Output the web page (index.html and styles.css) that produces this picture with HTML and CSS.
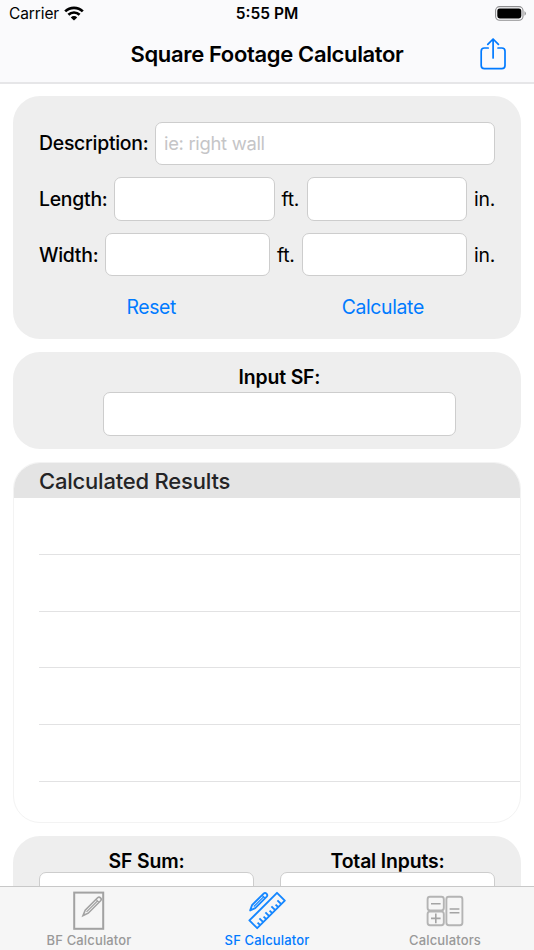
FILE: index.html
```html
<!DOCTYPE html>
<html lang="en">
<head>
    <meta charset="UTF-8">
    <meta name="viewport" content="width=device-width, initial-scale=1.0">
    <title>Square Footage Calculator</title>
    <link rel="stylesheet" href="styles.css">
</head>
<body>
    <div class="app">
        <header class="top">
            <div class="status-bar">
                <div class="carrier">
                    <span>Carrier</span>
                    <svg width="20" height="15" viewBox="0 0 20 15" fill="none" stroke="#000" stroke-width="2.7">
                        <path d="M1.2 5.4A12.6 12.6 0 0 1 18.8 5.4"/>
                        <path d="M4.4 8.8A8 8 0 0 1 15.6 8.8"/>
                        <path d="M10 14.6L6.8 11.4A4.6 4.6 0 0 1 13.2 11.4Z" fill="#000" stroke="none"/>
                    </svg>
                </div>
                <div class="time">5:55 PM</div>
                <svg class="battery" width="32" height="15" viewBox="0 0 32 15">
                    <rect x=".6" y=".6" width="27.4" height="13.6" rx="4" fill="none" stroke="#8e8e90" stroke-width="1.1"/>
                    <rect x="2.3" y="2.4" width="24" height="10" rx="2.4" fill="#000"/>
                    <path d="M29.5 5.1Q32.3 7.4 29.5 9.7Z" fill="#8e8e90"/>
                </svg>
            </div>
            <div class="nav-bar">
                <h1>Square Footage Calculator</h1>
                <svg class="share" width="26" height="32" viewBox="0 0 26 32" fill="none" stroke="#007aff" stroke-width="1.7" stroke-linecap="round" stroke-linejoin="round">
                    <path d="M8.2 10H4.4Q1.2 10 1.2 13.2V27.4Q1.2 30.6 4.4 30.6H21.8Q25 30.6 25 27.4V13.2Q25 10 21.8 10H18"/>
                    <path d="M13.1 20V1.2M7.8 6.4L13.1 1L18.4 6.4"/>
                </svg>
            </div>
        </header>

        <main class="content">
            <section class="card inputs">
                <div class="row">
                    <label class="description" for="description">Description:</label>
                    <input id="description" type="text" placeholder="ie: right wall">
                </div>
                <div class="row">
                    <label class="length" for="length-ft">Length:</label>
                    <input id="length-ft" type="text">
                    <span class="ft">ft.</span>
                    <input type="text">
                    <span class="in">in.</span>
                </div>
                <div class="row">
                    <label class="width" for="width-ft">Width:</label>
                    <input id="width-ft" type="text">
                    <span class="ft">ft.</span>
                    <input type="text">
                    <span class="in">in.</span>
                </div>
                <div class="buttons">
                    <button type="button">Reset</button>
                    <button type="button">Calculate</button>
                </div>
            </section>

            <section class="card input-sf">
                <label for="input-sf">Input SF:</label>
                <input id="input-sf" type="text">
            </section>

            <section class="results">
                <h2>Calculated Results</h2>
                <ul>
                    <li></li>
                    <li></li>
                    <li></li>
                    <li></li>
                    <li></li>
                </ul>
            </section>

            <section class="card totals">
                <div class="total">
                    <label for="sf-sum">SF Sum:</label>
                    <input id="sf-sum" type="text">
                </div>
                <div class="total">
                    <label for="total-inputs">Total Inputs:</label>
                    <input id="total-inputs" type="text">
                </div>
            </section>
        </main>

        <nav class="tab-bar">
            <div class="tab">
                <svg width="40" height="40" viewBox="0 0 40 40" fill="none" stroke="#a2a2a2" stroke-width="1.6">
                    <rect x="5.2" y="1.6" width="29" height="36.2" stroke-width="2"/>
                    <path d="M14 24.6L16.2 19.2L28.6 6.8Q30 5.4 31.5 6.8Q33 8.3 31.6 9.8L19.2 22.2Z"/>
                    <path d="M27 8.4L30 11.4M17.5 20.9L28.7 9.8" stroke-width="1.2"/>
                </svg>
                <span>BF Calculator</span>
            </div>
            <div class="tab active">
                <svg width="40" height="40" viewBox="0 0 40 40" fill="none" stroke="#1687ff" stroke-width="1.9" stroke-linejoin="round">
                    <path d="M30 1.8L37.8 9.6L10.2 37.2L2.4 29.4Z"/>
                    <path d="M13.2 34.2L10.6 31.6M16.2 31.2L12.4 27.4M19.2 28.2L16.6 25.6M22.2 25.2L18.4 21.4M25.2 22.2L22.6 19.6M28.2 19.2L24.4 15.4M31.2 16.2L28.6 13.6M34.2 13.2L30.4 9.4"/>
                    <path d="M3.2 19.4L5 14.2L16.6 2.6Q18 1.2 19.5 2.6Q21 4.2 19.7 5.7L8.2 17.2Z"/>
                    <path d="M15 4.2L18.2 7.3M6.8 15.5L16.8 5.6" stroke-width="1.2"/>
                </svg>
                <span>SF Calculator</span>
            </div>
            <div class="tab">
                <svg width="40" height="40" viewBox="0 0 40 40" fill="none" stroke="#b4b4b4" stroke-width="1.9">
                    <rect x="2.6" y="5.8" width="16.2" height="13.6" rx="2.4"/>
                    <rect x="2.6" y="20.6" width="16.2" height="13.6" rx="2.4"/>
                    <rect x="21.4" y="5.8" width="16" height="28.4" rx="2.4"/>
                    <path d="M6 12.8H15.6M10.8 22.6V32.2M6 27.4H15.6M24.6 18H34.4M24.6 21.8H34.4" stroke="#a4a4a4" stroke-width="1.6"/>
                </svg>
                <span>Calculators</span>
            </div>
        </nav>
    </div>
</body>
</html>
```
FILE: styles.css
```css
* {
    box-sizing: border-box;
}

body {
    margin: 0;
    font-family: Inter, Roboto, sans-serif;
    font-size: 19.4px;
    letter-spacing: -0.25px;
    color: #000;
    background-color: #fff;
}

.app {
    display: flex;
    flex-direction: column;
    height: 950px;
    overflow: hidden;
}

.top {
    flex: none;
    height: 84px;
    background-color: #fafafc;
    border-bottom: 2px solid #e6e6e8;
}

.status-bar {
    display: grid;
    grid-template-columns: 1fr auto 1fr;
    align-items: center;
    height: 27px;
    padding: 0 7px 0 9px;
    font-size: 15.5px;
    letter-spacing: 0;
}

.carrier {
    display: flex;
    align-items: center;
    gap: 5px;
    letter-spacing: -0.1px;
}

.time {
    padding-right: 2px;
    font-weight: 600;
}

.battery {
    justify-self: end;
}

.nav-bar {
    display: grid;
    grid-template-columns: 1fr auto 1fr;
    align-items: center;
    height: 54px;
    padding: 0 28px;
}

h1 {
    grid-column: 2;
    margin: 0;
    font-size: 22px;
    font-weight: 600;
    letter-spacing: -0.35px;
    white-space: nowrap;
}

.share {
    justify-self: end;
}

.content {
    display: flex;
    flex: 1;
    flex-direction: column;
    gap: 13px;
    min-height: 0;
    padding: 12px 13px 0;
    overflow: hidden;
}

.card {
    flex: none;
    background-color: #eee;
    border-radius: 27px;
}

.inputs {
    display: flex;
    flex-direction: column;
    gap: 12px;
    height: 243px;
    padding: 25.6px 26px 0;
}

.row {
    display: flex;
    align-items: center;
    gap: 7px;
}

label {
    font-weight: 500;
    white-space: nowrap;
}

.description {
    width: 109px;
}

.length {
    width: 68px;
}

.width {
    width: 59px;
}

.ft {
    width: 18px;
}

.in {
    width: 21px;
}

input {
    flex: 1;
    width: 100%;
    min-width: 0;
    height: 43.6px;
    padding: 0 8px;
    font: inherit;
    background-color: #fff;
    border: 1.3px solid #cdcdcd;
    border-radius: 7px;
}

input::placeholder {
    font-size: 18.4px;
    letter-spacing: -0.3px;
    color: #c5c5c7;
}

.buttons {
    display: grid;
    grid-template-columns: 1fr 1fr;
    gap: 7px;
    padding-top: 7px;
}

button {
    padding: 0;
    font: inherit;
    letter-spacing: -0.35px;
    color: #007aff;
    background: none;
    border: none;
}

.input-sf {
    display: flex;
    flex-direction: column;
    align-items: center;
    height: 97px;
    padding: 11px 65px 0 90px;
}

.input-sf label,
.total label {
    flex: none;
    height: 29px;
    font-weight: 600;
    letter-spacing: -0.15px;
    line-height: 29px;
}

.input-sf input,
.total input {
    flex: none;
}

.results {
    flex: none;
    height: 361px;
    overflow: hidden;
    border: 1px solid #f3f3f3;
    border-radius: 27px;
}

h2 {
    height: 35px;
    margin: 0;
    padding-left: 25px;
    font-size: 22px;
    font-weight: 500;
    letter-spacing: -0.2px;
    line-height: 37px;
    color: #242426;
    background-color: #e4e4e4;
}

ul {
    margin: 0;
    padding: 0 0 0 25px;
    list-style: none;
}

li {
    height: 56.8px;
    border-bottom: 1px solid #e2e2e3;
}

.totals {
    display: grid;
    grid-template-columns: 1fr 1fr;
    gap: 26px;
    height: 97px;
    padding: 11px 26px 0;
}

.total {
    display: flex;
    flex-direction: column;
    align-items: center;
}

.total label {
    height: 25px;
}

.tab-bar {
    display: grid;
    flex: none;
    grid-template-columns: repeat(3, 1fr);
    height: 64px;
    background-color: #f6f6f6;
    border-top: 1px solid #c8c8c8;
}

.tab {
    display: flex;
    flex-direction: column;
    align-items: center;
    padding-top: 4px;
    font-size: 13px;
    font-weight: 500;
    letter-spacing: 0.15px;
    line-height: 18px;
    color: #999;
}

.active {
    color: #007aff;
}
```
